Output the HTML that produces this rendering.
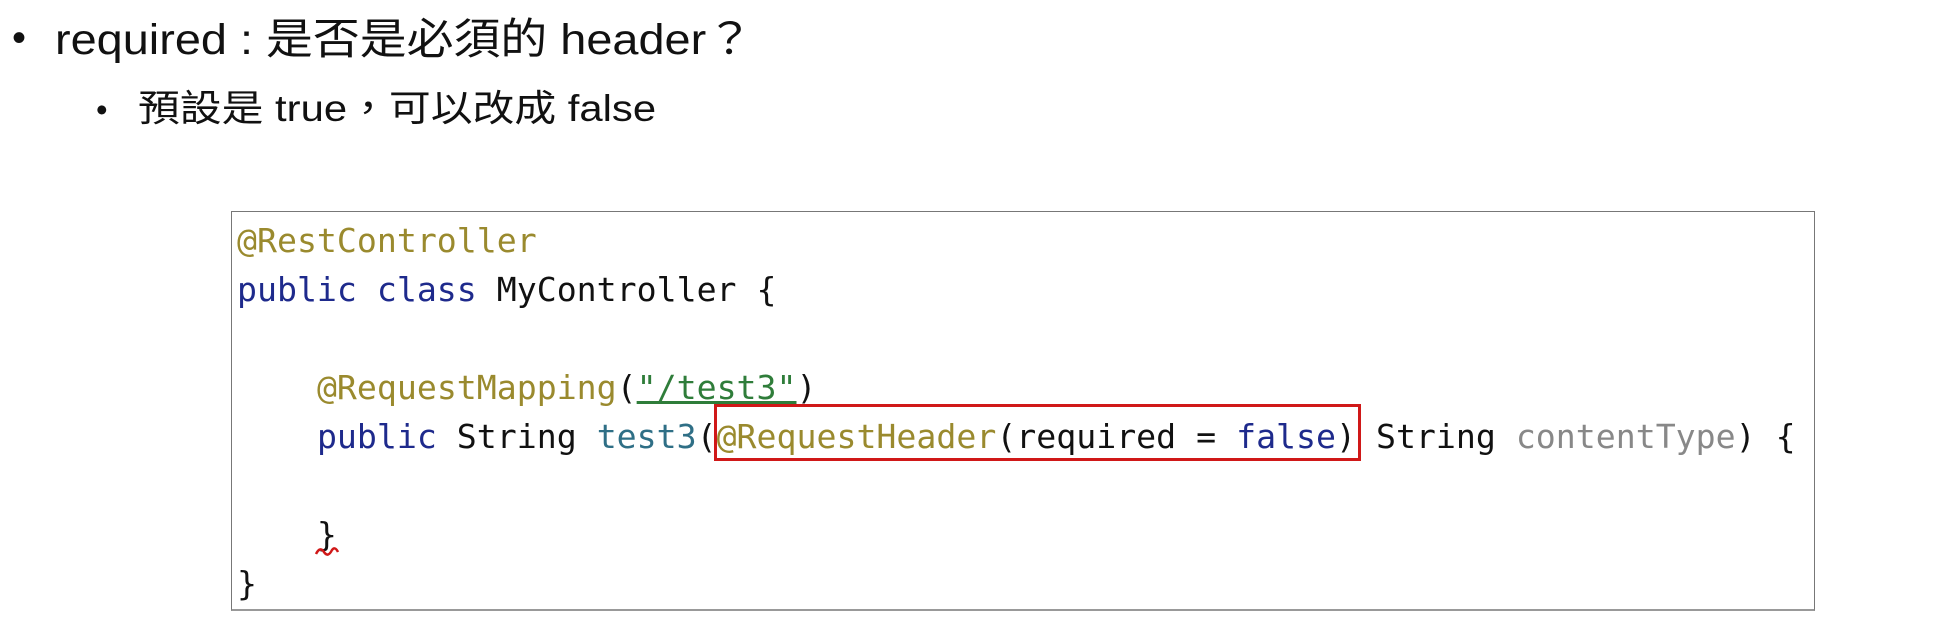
<!DOCTYPE html>
<html><head><meta charset="utf-8"><style>
html,body{margin:0;padding:0;background:#fff;width:1939px;height:625px;overflow:hidden;position:relative}
.t{position:absolute;font-family:"Liberation Sans","Noto Sans CJK TC",sans-serif;color:#111;white-space:nowrap;line-height:1;transform-origin:0 0}
.box{position:absolute;left:231px;top:211px;width:1584px;height:400px;border:1px solid #777;border-bottom:2px solid #999;box-sizing:border-box}
.c{position:absolute;left:237px;font-family:"DejaVu Sans Mono","Liberation Mono",monospace;font-size:33.2px;line-height:1;white-space:pre;color:#111}
.a{color:#9a8a2e}.k{color:#1e2a8c}.s{color:#2f7d3a;text-decoration:underline}.m{color:#2f6f86}.g{color:#888}
.red{position:absolute;left:714px;top:404px;width:647px;height:57px;border:3px solid #d01818;box-sizing:border-box}
</style></head><body>
<div class="t" style="left:12px;top:18px;font-size:40px">•</div>
<div class="t" style="left:55px;top:19px;font-size:43px;transform:scaleX(1.09)">required : 是否是必須的 header？</div>
<div class="t" style="left:96px;top:93px;font-size:33px">•</div>
<div class="t" style="left:138px;top:90px;font-size:37px;transform:scaleX(1.13)">預設是 true，可以改成 false</div>
<div class="box"></div>
<div class="c" style="top:224px"><span class="a">@RestController</span></div>
<div class="c" style="top:273px"><span class="k">public class</span> MyController {</div>
<div class="c" style="top:371px">    <span class="a">@RequestMapping</span>(<span class="s">"/test3"</span>)</div>
<div class="c" style="top:420px">    <span class="k">public</span> String <span class="m">test3</span>(<span class="a">@RequestHeader</span>(required = <span class="k">false</span>) String <span class="g">contentType</span>) {</div>
<div class="c" style="top:518px">    }</div>
<svg style="position:absolute;left:314px;top:544px" width="26" height="14"><path d="M2 10 Q6 2 10 8 Q14 14 18 6 Q21 2 24 8" fill="none" stroke="#d01818" stroke-width="2.5"/></svg>
<div class="c" style="top:567px">}</div>
<div class="red"></div>
</body></html>
